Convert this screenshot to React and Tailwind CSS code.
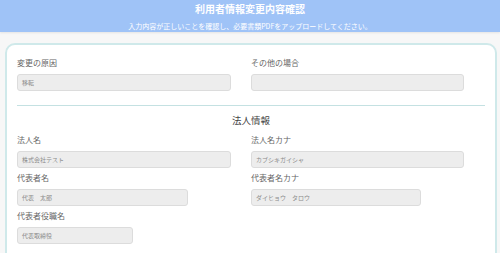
import React from 'react';

const Field = ({ label, value, width }) => (
    <div className="flex flex-col">
        <label className="h-[12px] leading-[12px] text-[8px] text-[#666]">{label}</label>
        <div className={`mt-[5px] h-[17px] rounded-[3px] border border-[#dcdcdc] bg-[#ededed] px-[4px] text-[6px] leading-[15px] text-[#8a8a8a] ${width}`}>
            {value}
        </div>
    </div>
);

const App = () => {
    return (
        <div className="min-h-screen bg-[#f7f7f7] font-['Noto_Sans_CJK_JP','Noto_Sans',sans-serif]">
            <header className="h-[32px] overflow-hidden bg-[#9fc3f7] text-center text-white shadow-[0_1px_2px_rgba(0,0,0,0.08)]">
                <h1 className="pt-[2px] h-[15px] text-[10px] leading-[13px] font-bold">利用者情報変更内容確認</h1>
                <p className="mt-[6px] text-[7px] leading-[10px]">入力内容が正しいことを確認し、必要書類PDFをアップロードしてください。</p>
            </header>

            <div className="pl-[5px] pr-[3px] pt-[11px]">
                <div className="rounded-[10px] border-2 border-[#cfe9ea] bg-white px-[10px] pt-[12px] pb-[40px]">
                    <div className="grid grid-cols-2">
                        <Field label="変更の原因" value="移転" width="w-[214px]" />
                        <Field label="その他の場合" value="" width="w-[213px]" />
                    </div>

                    <hr className="mt-[14px] border-t border-[#c4e1e2]" />

                    <h2 className="mt-[7px] h-[14px] text-center text-[9.5px] leading-[14px] text-[#444]">法人情報</h2>

                    <div className="mt-[7px] grid grid-cols-2 gap-y-[4px]">
                        <Field label="法人名" value="株式会社テスト" width="w-[214px]" />
                        <Field label="法人名カナ" value="カブシキガイシャ" width="w-[213px]" />
                        <Field label="代表者名" value="代表　太郎" width="w-[171px]" />
                        <Field label="代表者名カナ" value="ダイヒョウ　タロウ" width="w-[170px]" />
                        <Field label="代表者役職名" value="代表取締役" width="w-[116px]" />
                    </div>
                </div>
            </div>
        </div>
    );
};

export default App;
